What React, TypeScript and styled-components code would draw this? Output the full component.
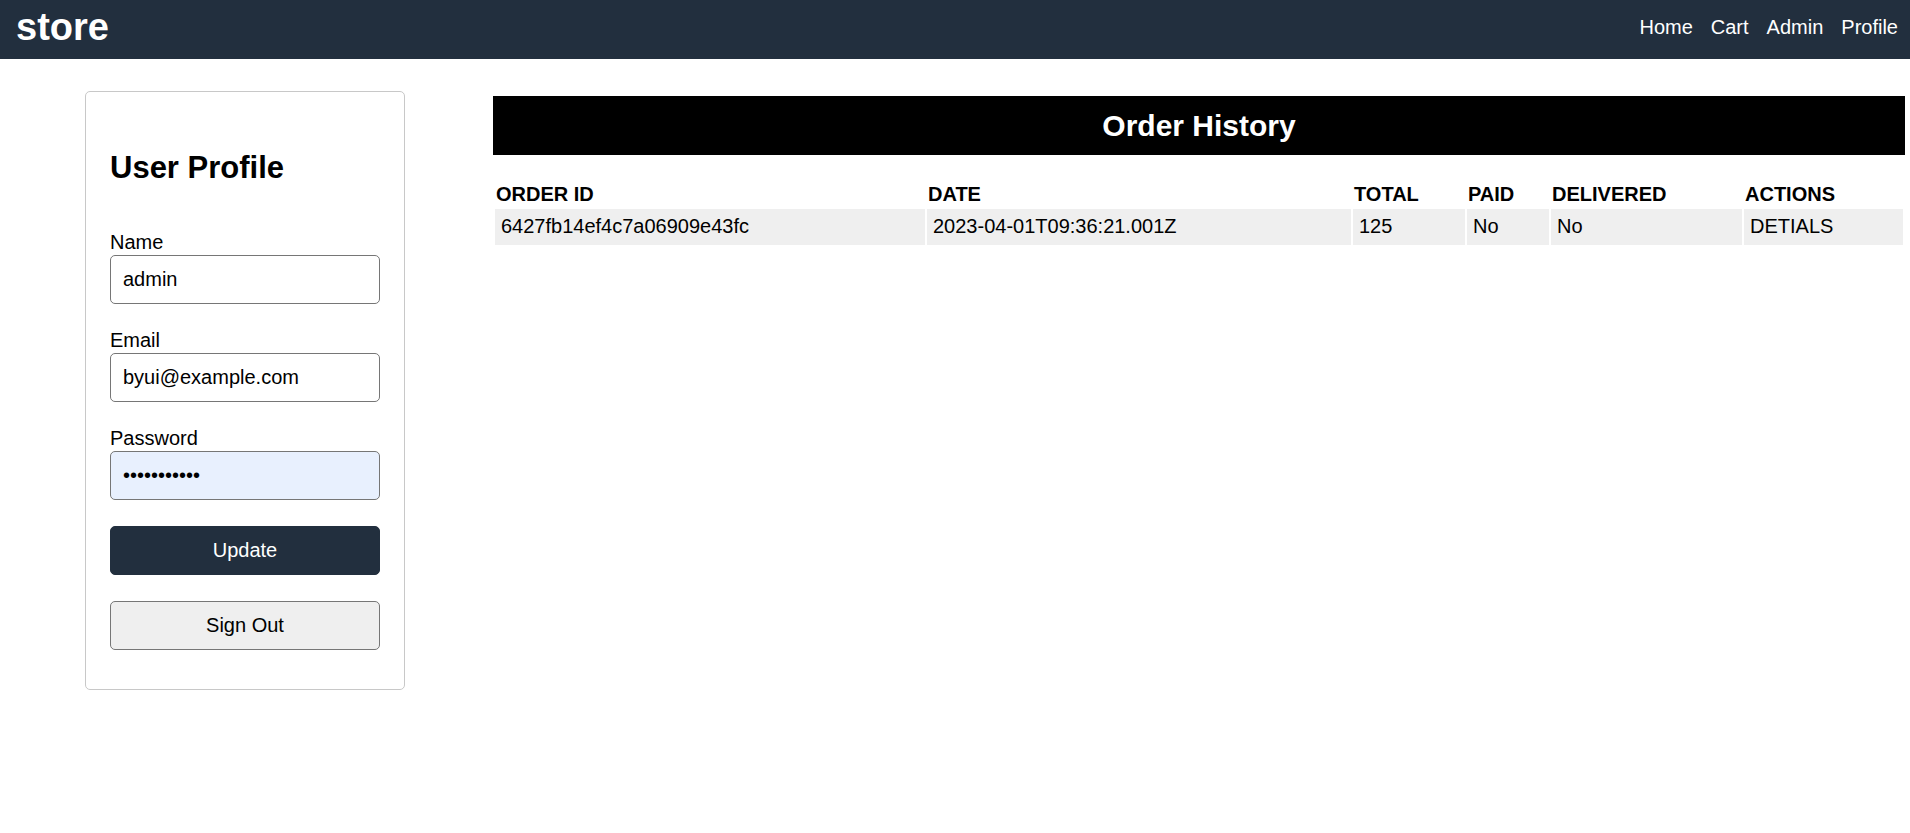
import React from "react";
import styled, { createGlobalStyle } from "styled-components";

const GlobalStyle = createGlobalStyle`
  html, body {
    margin: 0;
    padding: 0;
    background: #ffffff;
    font-family: "Liberation Sans", Arial, sans-serif;
    font-size: 20px;
    color: #000000;
  }
  * { box-sizing: border-box; }
`;

const TopBar = styled.header`
  display: flex;
  justify-content: space-between;
  align-items: flex-start;
  height: 59px;
  padding: 0 12px 0 16px;
  background: #222f3e;
`;

const Logo = styled.a`
  margin-top: 6px;
  font-size: 38px;
  font-weight: bold;
  line-height: normal;
  color: #ffffff;
  text-decoration: none;
`;

const Nav = styled.nav`
  display: flex;
  gap: 18px;
  margin-top: 16px;
`;

const NavLink = styled.a`
  font-size: 20px;
  line-height: 23px;
  color: #ffffff;
  text-decoration: none;
`;

const Main = styled.main`
  display: flex;
  align-items: flex-start;
  gap: 88px;
  padding: 32px 5px 0 85px;
`;

const Card = styled.section`
  flex: none;
  width: 320px;
  border: 1px solid #c8c8c8;
  border-radius: 5px;
  padding: 34px 24px 39px;
`;

const CardTitle = styled.h2`
  margin: 24px 0 46px;
  font-size: 31px;
  font-weight: bold;
  line-height: 35px;
`;

const Form = styled.form`
  display: flex;
  flex-direction: column;
  gap: 25px;
`;

const Field = styled.div`
  display: flex;
  flex-direction: column;
`;

const Label = styled.label`
  font-size: 20px;
  line-height: 23px;
  margin-bottom: 1px;
`;

const Input = styled.input<{ $filled?: boolean }>`
  height: 49px;
  width: 100%;
  border: 1px solid #767676;
  border-radius: 5px;
  padding: 0 12px;
  font-family: "Liberation Sans", Arial, sans-serif;
  font-size: 20px;
  color: #000000;
  background: ${(p) => (p.$filled ? "#e8f0fe" : "#ffffff")};
  outline: none;
`;

const Button = styled.button<{ $primary?: boolean }>`
  height: 49px;
  width: 100%;
  margin-top: 1px;
  border: 1px solid ${(p) => (p.$primary ? "#222f3e" : "#767676")};
  border-radius: 5px;
  background: ${(p) => (p.$primary ? "#222f3e" : "#efefef")};
  color: ${(p) => (p.$primary ? "#ffffff" : "#000000")};
  font-family: "Liberation Sans", Arial, sans-serif;
  font-size: 20px;
  cursor: pointer;
`;

const Orders = styled.section`
  flex: 1;
  margin-top: 5px;
  min-width: 0;
`;

const OrdersTitle = styled.h2`
  margin: 0 0 25px;
  padding: 12px 0 12px;
  background: #000000;
  color: #ffffff;
  font-size: 30px;
  font-weight: bold;
  line-height: 35px;
  text-align: center;
`;

const Table = styled.table`
  width: 100%;
  table-layout: fixed;
  border-collapse: separate;
  border-spacing: 2px;
  font-size: 20px;
`;

const Th = styled.th<{ $w: number }>`
  width: ${(p) => p.$w}px;
  padding: 1px;
  text-align: left;
  font-weight: bold;
  line-height: 23px;
`;

const Td = styled.td`
  padding: 6px 6px 7px;
  background: #efefef;
  line-height: 23px;
  white-space: nowrap;
`;

const columns = [
  { label: "ORDER ID", w: 430 },
  { label: "DATE", w: 424 },
  { label: "TOTAL", w: 112 },
  { label: "PAID", w: 82 },
  { label: "DELIVERED", w: 191 },
  { label: "ACTIONS", w: 159 },
];

const orders = [
  {
    id: "6427fb14ef4c7a06909e43fc",
    date: "2023-04-01T09:36:21.001Z",
    total: "125",
    paid: "No",
    delivered: "No",
  },
];

export default function App() {
  return (
    <>
      <GlobalStyle />
      <TopBar>
        <Logo href="#">store</Logo>
        <Nav>
          <NavLink href="#">Home</NavLink>
          <NavLink href="#">Cart</NavLink>
          <NavLink href="#">Admin</NavLink>
          <NavLink href="#">Profile</NavLink>
        </Nav>
      </TopBar>
      <Main>
        <Card>
          <CardTitle>User Profile</CardTitle>
          <Form onSubmit={(e) => e.preventDefault()}>
            <Field>
              <Label htmlFor="name">Name</Label>
              <Input id="name" type="text" defaultValue="admin" />
            </Field>
            <Field>
              <Label htmlFor="email">Email</Label>
              <Input id="email" type="email" defaultValue="byui@example.com" />
            </Field>
            <Field>
              <Label htmlFor="password">Password</Label>
              <Input id="password" type="password" defaultValue="adminadmin1" $filled />
            </Field>
            <Button type="submit" $primary>
              Update
            </Button>
            <Button type="button">Sign Out</Button>
          </Form>
        </Card>
        <Orders>
          <OrdersTitle>Order History</OrdersTitle>
          <Table>
            <thead>
              <tr>
                {columns.map((c) => (
                  <Th key={c.label} $w={c.w}>
                    {c.label}
                  </Th>
                ))}
              </tr>
            </thead>
            <tbody>
              {orders.map((o) => (
                <tr key={o.id}>
                  <Td>{o.id}</Td>
                  <Td>{o.date}</Td>
                  <Td>{o.total}</Td>
                  <Td>{o.paid}</Td>
                  <Td>{o.delivered}</Td>
                  <Td>DETIALS</Td>
                </tr>
              ))}
            </tbody>
          </Table>
        </Orders>
      </Main>
    </>
  );
}
